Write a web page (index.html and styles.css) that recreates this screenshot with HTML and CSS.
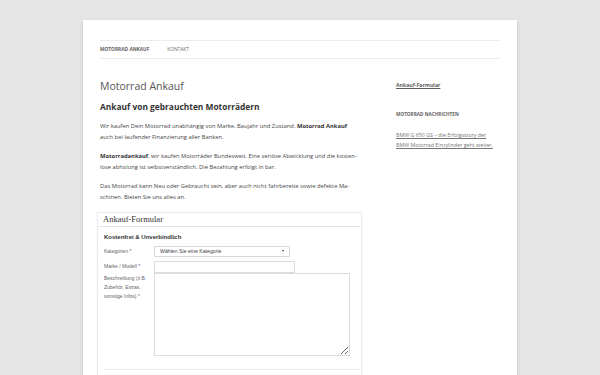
FILE: index.html
```html
<!DOCTYPE html>
<html lang="de">
<head>
  <meta charset="UTF-8">
  <meta name="viewport" content="width=device-width, initial-scale=1.0">
  <title>Motorrad Ankauf</title>
  <link rel="stylesheet" href="styles.css">
</head>
<body>
  <div class="site">
    <nav class="main-nav">
      <a href="#" class="current">Motorrad Ankauf</a>
      <a href="#">Kontakt</a>
    </nav>

    <div class="columns">
      <div class="content">
        <h1 class="entry-title">Motorrad Ankauf</h1>
        <h2>Ankauf von gebrauchten Motorrädern</h2>
        <p>Wir kaufen Dein Motorrad unabhängig von Marke, Baujahr und Zustand. <strong>Motorrad Ankauf</strong> auch bei laufender Finanzierung aller Banken.</p>
        <p><strong>Motorradankauf</strong>, wir kaufen Motorräder Bundesweit. Eine seriöse Abwicklung und die kosten&shy;lose abholung ist selbstverständlich. Die Bezahlung erfolgt in bar.</p>
        <p>Das Motorrad kann Neu oder Gebraucht sein, aber auch nicht fahrbereite sowie defekte Ma&shy;schinen. Bieten Sie uns alles an.</p>

        <div class="form-box">
          <div class="form-header">Ankauf-Formular</div>
          <form class="form-body">
            <h3>Kostenfrei &amp; Unverbindlich</h3>
            <div class="form-row">
              <label for="kategorie">Kategorien *</label>
              <div class="select-wrap">
                <select id="kategorie">
                  <option>Wählen Sie eine Kategorie</option>
                </select>
              </div>
            </div>
            <div class="form-row">
              <label for="modell">Marke / Modell *</label>
              <input type="text" id="modell" class="input-model">
            </div>
            <div class="form-row">
              <label for="beschreibung">Beschreibung (z.B. Zubehör, Extras, sonstige Infos) *</label>
              <textarea id="beschreibung"></textarea>
            </div>
            <div class="form-sep"></div>
          </form>
        </div>
      </div>

      <aside class="sidebar">
        <a href="#" class="widget-link">Ankauf-Formular</a>
        <h3 class="widget-title">Motorrad Nachrichten</h3>
        <a href="#" class="news-link">BMW G 650 GS – die Erfolgsstory der BMW Motorrad Einzylinder geht weiter.</a>
      </aside>
    </div>
  </div>
</body>
</html>
```

FILE: styles.css
```css
body {
  margin: 0;
  padding: 0;
  font-family: "Open Sans", "DejaVu Sans", sans-serif;
  background: #e6e6e6;
  color: #444;
}

.site {
  width: 400px;
  min-height: 400px;
  margin: 20px auto 0;
  padding: 20px 17px 0;
  background: #fff;
  box-shadow: 0 1px 3px rgba(100,100,100,0.3);
}

.main-nav {
  display: flex;
  gap: 18px;
  height: 17px;
  border-top: 1px solid #ededed;
  border-bottom: 1px solid #ededed;
}

.main-nav a {
  font-size: 4.8px;
  line-height: 17px;
  text-transform: uppercase;
  text-decoration: none;
  color: #6a6a6a;
}

.main-nav a.current {
  font-weight: bold;
  color: #5e5e5e;
}

.columns {
  display: flex;
  justify-content: space-between;
}

.content {
  width: 260px;
}

.entry-title {
  margin: 20px 0 0;
  font-size: 10.5px;
  line-height: 14px;
  font-weight: normal;
  color: #555;
}

.content h2 {
  margin: 8px 0 0;
  font-size: 8.4px;
  line-height: 11px;
  font-weight: bold;
  color: #333;
}

.content p {
  margin: 9px 0 0;
  font-size: 5.8px;
  line-height: 11.3px;
  hyphens: manual;
}

.content p + p {
  margin-top: 7.5px;
}

.content p strong {
  color: #333;
}

/* form */
.form-box {
  margin: 8px 0 0 -3px;
  width: 263px;
  border: 1px solid #ececec;
  box-shadow: 0 0 2px rgba(0,0,0,0.06);
  font-family: "Liberation Sans", Arial, sans-serif;
}

.form-header {
  height: 13px;
  padding-left: 5px;
  font-family: "Liberation Serif", "Times New Roman", serif;
  font-size: 8.5px;
  line-height: 13px;
  color: #333;
  border-bottom: 1px solid #e4e4e4;
}

.form-body {
  padding: 0 0 10px 6px;
  font-size: 5px;
  line-height: 9px;
}

.form-body h3 {
  margin: 6px 0 0;
  font-size: 6px;
  line-height: 9px;
  color: #333;
}

.form-row {
  display: flex;
  align-items: flex-start;
  margin-top: 4px;
}

.form-row + .form-row + .form-row {
  margin-top: 0;
}

.form-row label {
  width: 50px;
  flex-shrink: 0;
  padding: 1px 7px 0 0;
  box-sizing: border-box;
  font-size: 5px;
  line-height: 9px;
  color: #666;
}

.select-wrap {
  position: relative;
}

.select-wrap select {
  display: block;
  appearance: none;
  width: 136px;
  height: 11px;
  margin: 0;
  padding: 0 0 0 5px;
  font-family: "Liberation Sans", Arial, sans-serif;
  font-size: 5.2px;
  color: #444;
  background: #fff;
  border: 1px solid #d8d8d8;
  border-radius: 1px;
  box-sizing: border-box;
}

.select-wrap::after {
  content: "";
  position: absolute;
  right: 6px;
  top: 4.5px;
  border-left: 1.5px solid transparent;
  border-right: 1.5px solid transparent;
  border-top: 2px solid #444;
}

.input-model {
  display: block;
  width: 141px;
  height: 12px;
  margin: 0;
  padding: 0;
  border: 1px solid #dcdcdc;
  box-sizing: border-box;
}

.form-row textarea {
  display: block;
  width: 196px;
  height: 83px;
  margin: 0;
  padding: 0;
  border: 1px solid #dcdcdc;
  box-sizing: border-box;
  resize: both;
}

.form-sep {
  margin-top: 13px;
  border-top: 1px solid #ececec;
}

/* sidebar */
.sidebar {
  width: 104px;
  padding-top: 21px;
}

.widget-link {
  display: block;
  font-size: 5.2px;
  line-height: 10px;
  font-weight: bold;
  color: #5e5e5e;
}

.widget-title {
  margin: 19px 0 0;
  font-size: 4.7px;
  line-height: 10px;
  text-transform: uppercase;
  color: #636363;
}

.news-link {
  display: block;
  margin-top: 11px;
  font-size: 5.3px;
  line-height: 10px;
  color: #757575;
}
```
